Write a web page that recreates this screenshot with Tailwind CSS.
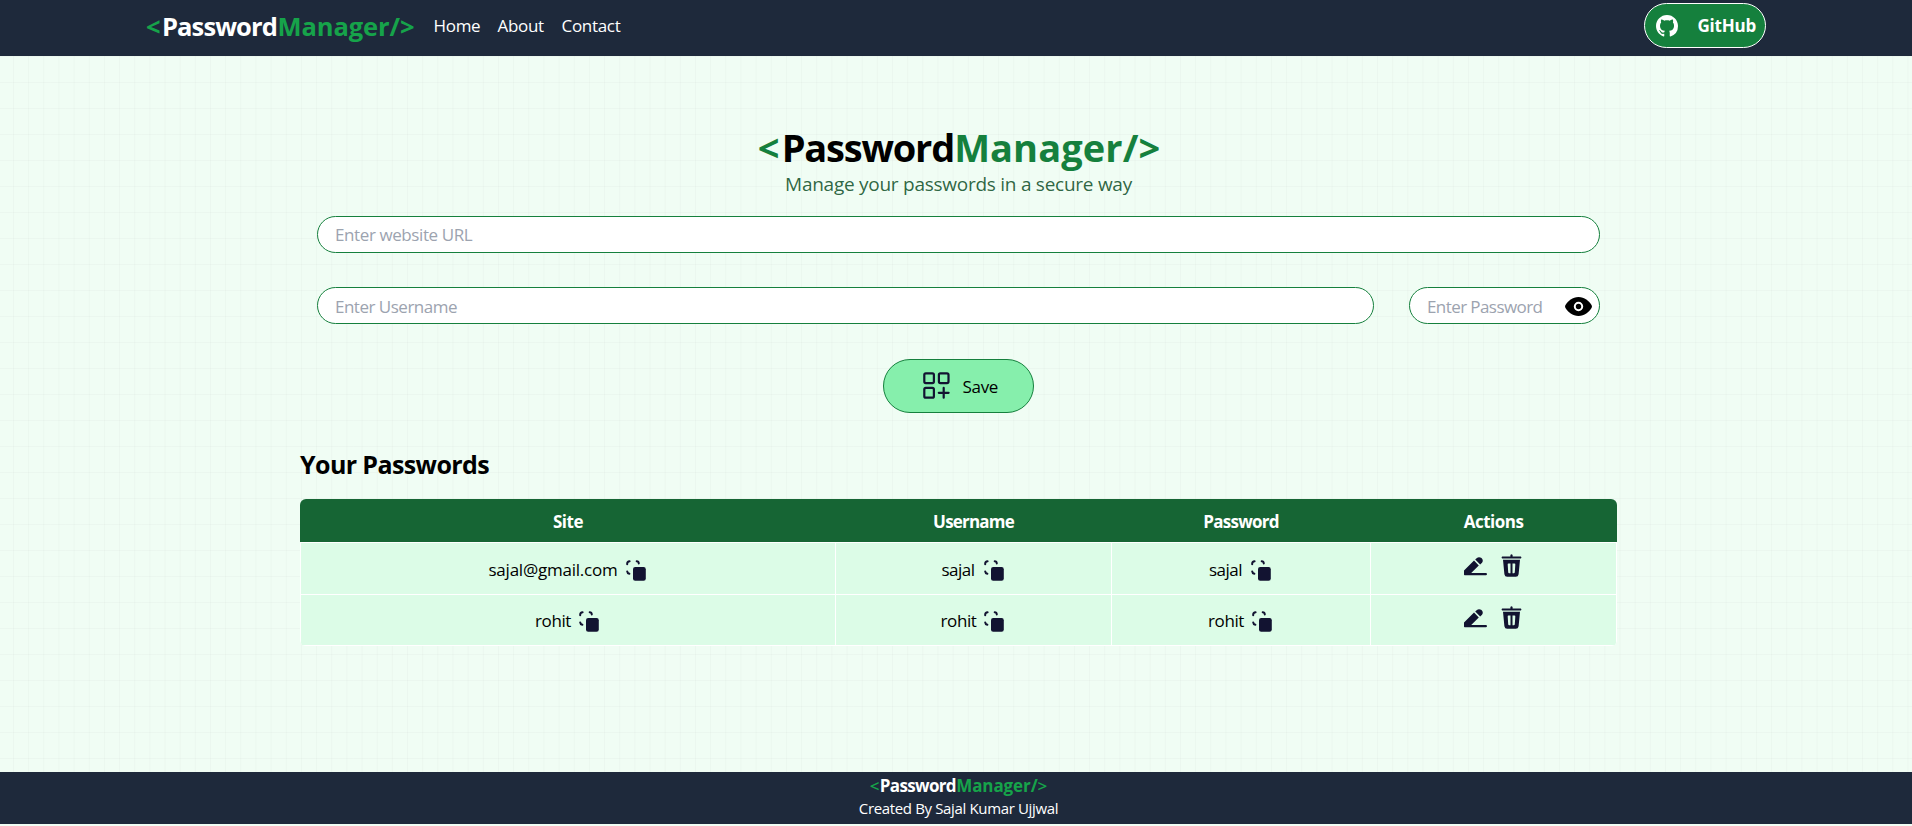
<!DOCTYPE html>
<html lang="en">
<head>
<meta charset="utf-8">
<title>PasswordManager</title>
<script src="https://cdn.jsdelivr.net/npm/@tailwindcss/browser@4"></script>
</head>
<body class="h-[826px] overflow-hidden flex flex-col bg-[#f0fdf4] font-['Open_Sans','Noto_Sans',sans-serif] text-[17px] leading-6 tracking-[-0.4px] text-black">

<svg class="hidden">
  <symbol id="copy" viewBox="0 0 20 21">
    <g fill="none" stroke="#121331" stroke-width="2" stroke-linecap="round">
      <path d="M1.200 4.200V3.600Q1.200 1.300 3.600 1.200M10.700 1.200Q12.600 1.300 12.800 3.400M1.200 11.400Q1.300 13.200 3.400 13.800"/>
    </g>
    <rect x="7" y="7" width="12.800" height="13.800" rx="2.200" fill="#121331"/>
  </symbol>
  <symbol id="edit" viewBox="0 0 23 19">
    <path fill="#121331" d="M0 17.6V13.4L10 3.6L14.8 8.4L7.2 15.9H21.8Q23 16 23 17.1Q23 18.3 21.8 18.3H.7Q0 18.3 0 17.6Z"/>
    <path fill="#121331" d="M11.200 2.600L12.600 1.200Q15 -.7 17.500 1.100Q19.800 3.300 18 5.800L16.200 7.400Z"/>
  </symbol>
  <symbol id="trash" viewBox="0 0 21 23">
    <path fill="#121331" d="M9.4 1Q10.5-.5 11.6 1V2.4H19.8Q21 3.4 19.8 4.4H1.2Q0 3.4 1.2 2.4H9.4Z"/>
    <path fill="#121331" fill-rule="evenodd" d="M2 5.8H19L17.6 20.2Q17.2 22.7 14.8 22.8H6.2Q3.8 22.7 3.4 20.2ZM7.4 9.6Q6.6 9.6 6.7 10.5L7.2 18.2Q7.3 19.2 8.2 19.2H9.5V9.6ZM11.5 9.6V19.2H12.8Q13.7 19.2 13.8 18.2L14.3 10.5Q14.4 9.6 13.6 9.6Z"/>
  </symbol>
</svg>

<nav class="h-14 shrink-0 bg-[#1e293b] text-white pb-[5px] pl-[146px] pr-[146px] flex items-center justify-between">
  <div class="flex items-center">
    <div class="flex text-[25.5px] font-bold w-[287.5px]">
      <span class="text-[#16a34a] w-4">&lt;</span><span class="tracking-[-0.9px] w-[115.5px]">Password</span><span class="text-[#16a34a] tracking-[-0.1px]">Manager/&gt;</span>
    </div>
    <ul class="flex gap-4 tracking-[-0.3px]">
      <li class="w-12">Home</li><li class="w-12">About</li><li>Contact</li>
    </ul>
  </div>
  <button class="w-[122px] h-[45px] rounded-full border border-white bg-[#15803d] flex items-center justify-between pl-[11px] pr-[9px]">
    <svg class="w-[22px] h-[22px]" viewBox="0 0 16 16" fill="white"><path d="M8 0C3.58 0 0 3.58 0 8c0 3.54 2.29 6.53 5.47 7.59.4.07.55-.17.55-.38 0-.19-.01-.82-.01-1.49-2.01.37-2.53-.49-2.69-.94-.09-.23-.48-.94-.82-1.13-.28-.15-.68-.52-.01-.53.63-.01 1.08.58 1.23.82.72 1.21 1.87.87 2.33.66.07-.52.28-.87.51-1.07-1.78-.2-3.64-.89-3.64-3.95 0-.87.31-1.59.82-2.15-.08-.2-.36-1.02.08-2.12 0 0 .67-.21 2.2.82.64-.18 1.32-.27 2-.27s1.36.09 2 .27c1.53-1.04 2.2-.82 2.2-.82.44 1.1.16 1.92.08 2.12.51.56.82 1.27.82 2.15 0 3.07-1.87 3.75-3.65 3.95.29.25.54.73.54 1.48 0 1.07-.01 1.93-.01 2.2 0 .21.15.46.55.38A8.01 8.01 0 0 0 16 8c0-4.42-3.58-8-8-8Z"/></svg>
    <span class="font-bold tracking-[-0.2px]">GitHub</span>
  </button>
</nav>

<main class="h-[716px] shrink-0 flex flex-col items-center bg-[linear-gradient(to_right,#8080800c_1px,transparent_1px),linear-gradient(to_bottom,#8080800c_1px,transparent_1px)] bg-[size:15.1667px_26px] bg-[position:-2.2px_0px]">
  <h1 class="mt-[69px] h-11 leading-[44px] flex text-[38px] font-bold text-[#15803d] pl-1.5">
    <span class="w-6">&lt;</span><span class="text-black tracking-[-1.2px] w-[172.5px]">Password</span><span class="tracking-[0.1px]">Manager/&gt;</span>
  </h1>
  <p class="h-7 leading-[31px] text-[19px] text-[#14532d]/90 tracking-[-0.26px] pl-[5px]">Manage your passwords in a secure way</p>

  <div class="w-[1283px] mt-[19px] ml-[5px]">
    <div class="h-[37px] rounded-full border border-[#15803d] bg-white px-[17px] flex items-center text-[#9ca3af]">Enter website URL</div>
    <div class="mt-[34px] flex gap-[35px]">
      <div class="grow h-[37px] rounded-full border border-[#15803d] bg-white px-[17px] pt-[2px] flex items-center text-[#9ca3af] tracking-[-0.5px]">Enter Username</div>
      <div class="w-[191px] h-[37px] rounded-full border border-[#15803d] bg-white pl-[17px] pr-[7px] flex items-center justify-between text-[#9ca3af]">
        <span class="tracking-[-0.58px] pt-[2px]">Enter Password</span>
        <svg class="w-[27px] h-[19px] mt-px" viewBox="0 0 27 19"><path fill="#000" d="M13.5 0C19.5 0 24 4 26.500 8Q27.400 9.500 26.500 11C24 15 19.500 19 13.500 19S3 15 .5 11Q-.4 9.500.5 8C3 4 7.500 0 13.500 0Z"/><circle cx="13.500" cy="9.500" r="3.700" fill="none" stroke="#fff" stroke-width="2"/></svg>
      </div>
    </div>
  </div>

  <button class="mt-[35px] ml-[5px] w-[151px] h-[54px] rounded-full border border-[#15803d] bg-[#86efac] flex items-center pl-[39px]">
    <svg class="w-[27px] h-[27px] -mt-px" viewBox="0 0 27 27" fill="none" stroke="#121331" stroke-width="2.200" stroke-linecap="round"><rect x="1.300" y="1.300" width="9.600" height="9.800" rx="1.500"/><rect x="15.900" y="1.300" width="9.600" height="9.800" rx="1.500"/><rect x="1.300" y="15.900" width="9.600" height="9.800" rx="1.500"/><path d="M20.700 15.900V25.700M15.800 20.800H25.600"/></svg>
    <span class="ml-[12.5px] pt-[2px] tracking-[-0.3px]">Save</span>
  </button>

  <section class="w-[1317px] mt-[35px] ml-[5px]">
    <h2 class="h-8 leading-8 text-[25px] font-bold tracking-[-0.6px]">Your Passwords</h2>
    <div class="mt-[19px] rounded-md overflow-hidden">
      <div class="h-[43px] pt-[2px] grid grid-cols-[536px_276px_259px_246px] items-center text-center bg-[#166534] text-white font-bold tracking-[-0.5px]">
        <span>Site</span><span class="tracking-[-0.8px] pr-px">Username</span><span class="tracking-[-0.75px] pr-px">Password</span><span class="tracking-[-0.5px] pr-px">Actions</span>
      </div>
      <div class="grid grid-cols-[534px_275px_258px_245px] grid-rows-[51px_50px] gap-px p-px bg-white *:bg-[#dcfce7] *:flex *:items-center *:justify-center *:pr-[2px]">
        <div><span class="pt-[2px] tracking-[-0.22px]">sajal@gmail.com</span><svg class="w-5 h-[21px] ml-2 mt-1"><use href="#copy"/></svg></div>
        <div><span class="pt-[2px] tracking-[-0.5px]">sajal</span><svg class="w-5 h-[21px] ml-[9px] mt-1"><use href="#copy"/></svg></div>
        <div><span class="pt-[2px] tracking-[-0.5px]">sajal</span><svg class="w-5 h-[21px] ml-[9px] mt-1"><use href="#copy"/></svg></div>
        <div class="pb-[6px]"><svg class="w-[23px] h-[19px] mt-px"><use href="#edit"/></svg><svg class="w-[21px] h-[23px] ml-[14px]"><use href="#trash"/></svg></div>
        <div><span class="pt-px">rohit</span><svg class="w-5 h-[21px] ml-[8px] mt-[3px]"><use href="#copy"/></svg></div>
        <div><span class="pt-px">rohit</span><svg class="w-5 h-[21px] ml-[8px] mt-[3px]"><use href="#copy"/></svg></div>
        <div><span class="pt-px">rohit</span><svg class="w-5 h-[21px] ml-[8px] mt-[3px]"><use href="#copy"/></svg></div>
        <div class="pb-[5px]"><svg class="w-[23px] h-[19px] mt-px"><use href="#edit"/></svg><svg class="w-[21px] h-[23px] ml-[14px]"><use href="#trash"/></svg></div>
      </div>
    </div>
  </section>
</main>

<footer class="h-[52px] shrink-0 bg-[#1e293b] text-white flex flex-col items-center pt-[2px] pl-[5px]">
  <div class="flex font-bold">
    <span class="font-semibold text-[#16a34a] w-[10px]">&lt;</span><span class="tracking-[-0.65px] w-[76.5px]">Password</span><span class="text-[#16a34a] tracking-[-0.1px]">Manager/<span class="font-semibold">&gt;</span></span>
  </div>
  <div class="h-[22px] leading-[20px] text-[15px] tracking-[-0.35px]">Created By Sajal Kumar Ujjwal</div>
</footer>
</body>
</html>
